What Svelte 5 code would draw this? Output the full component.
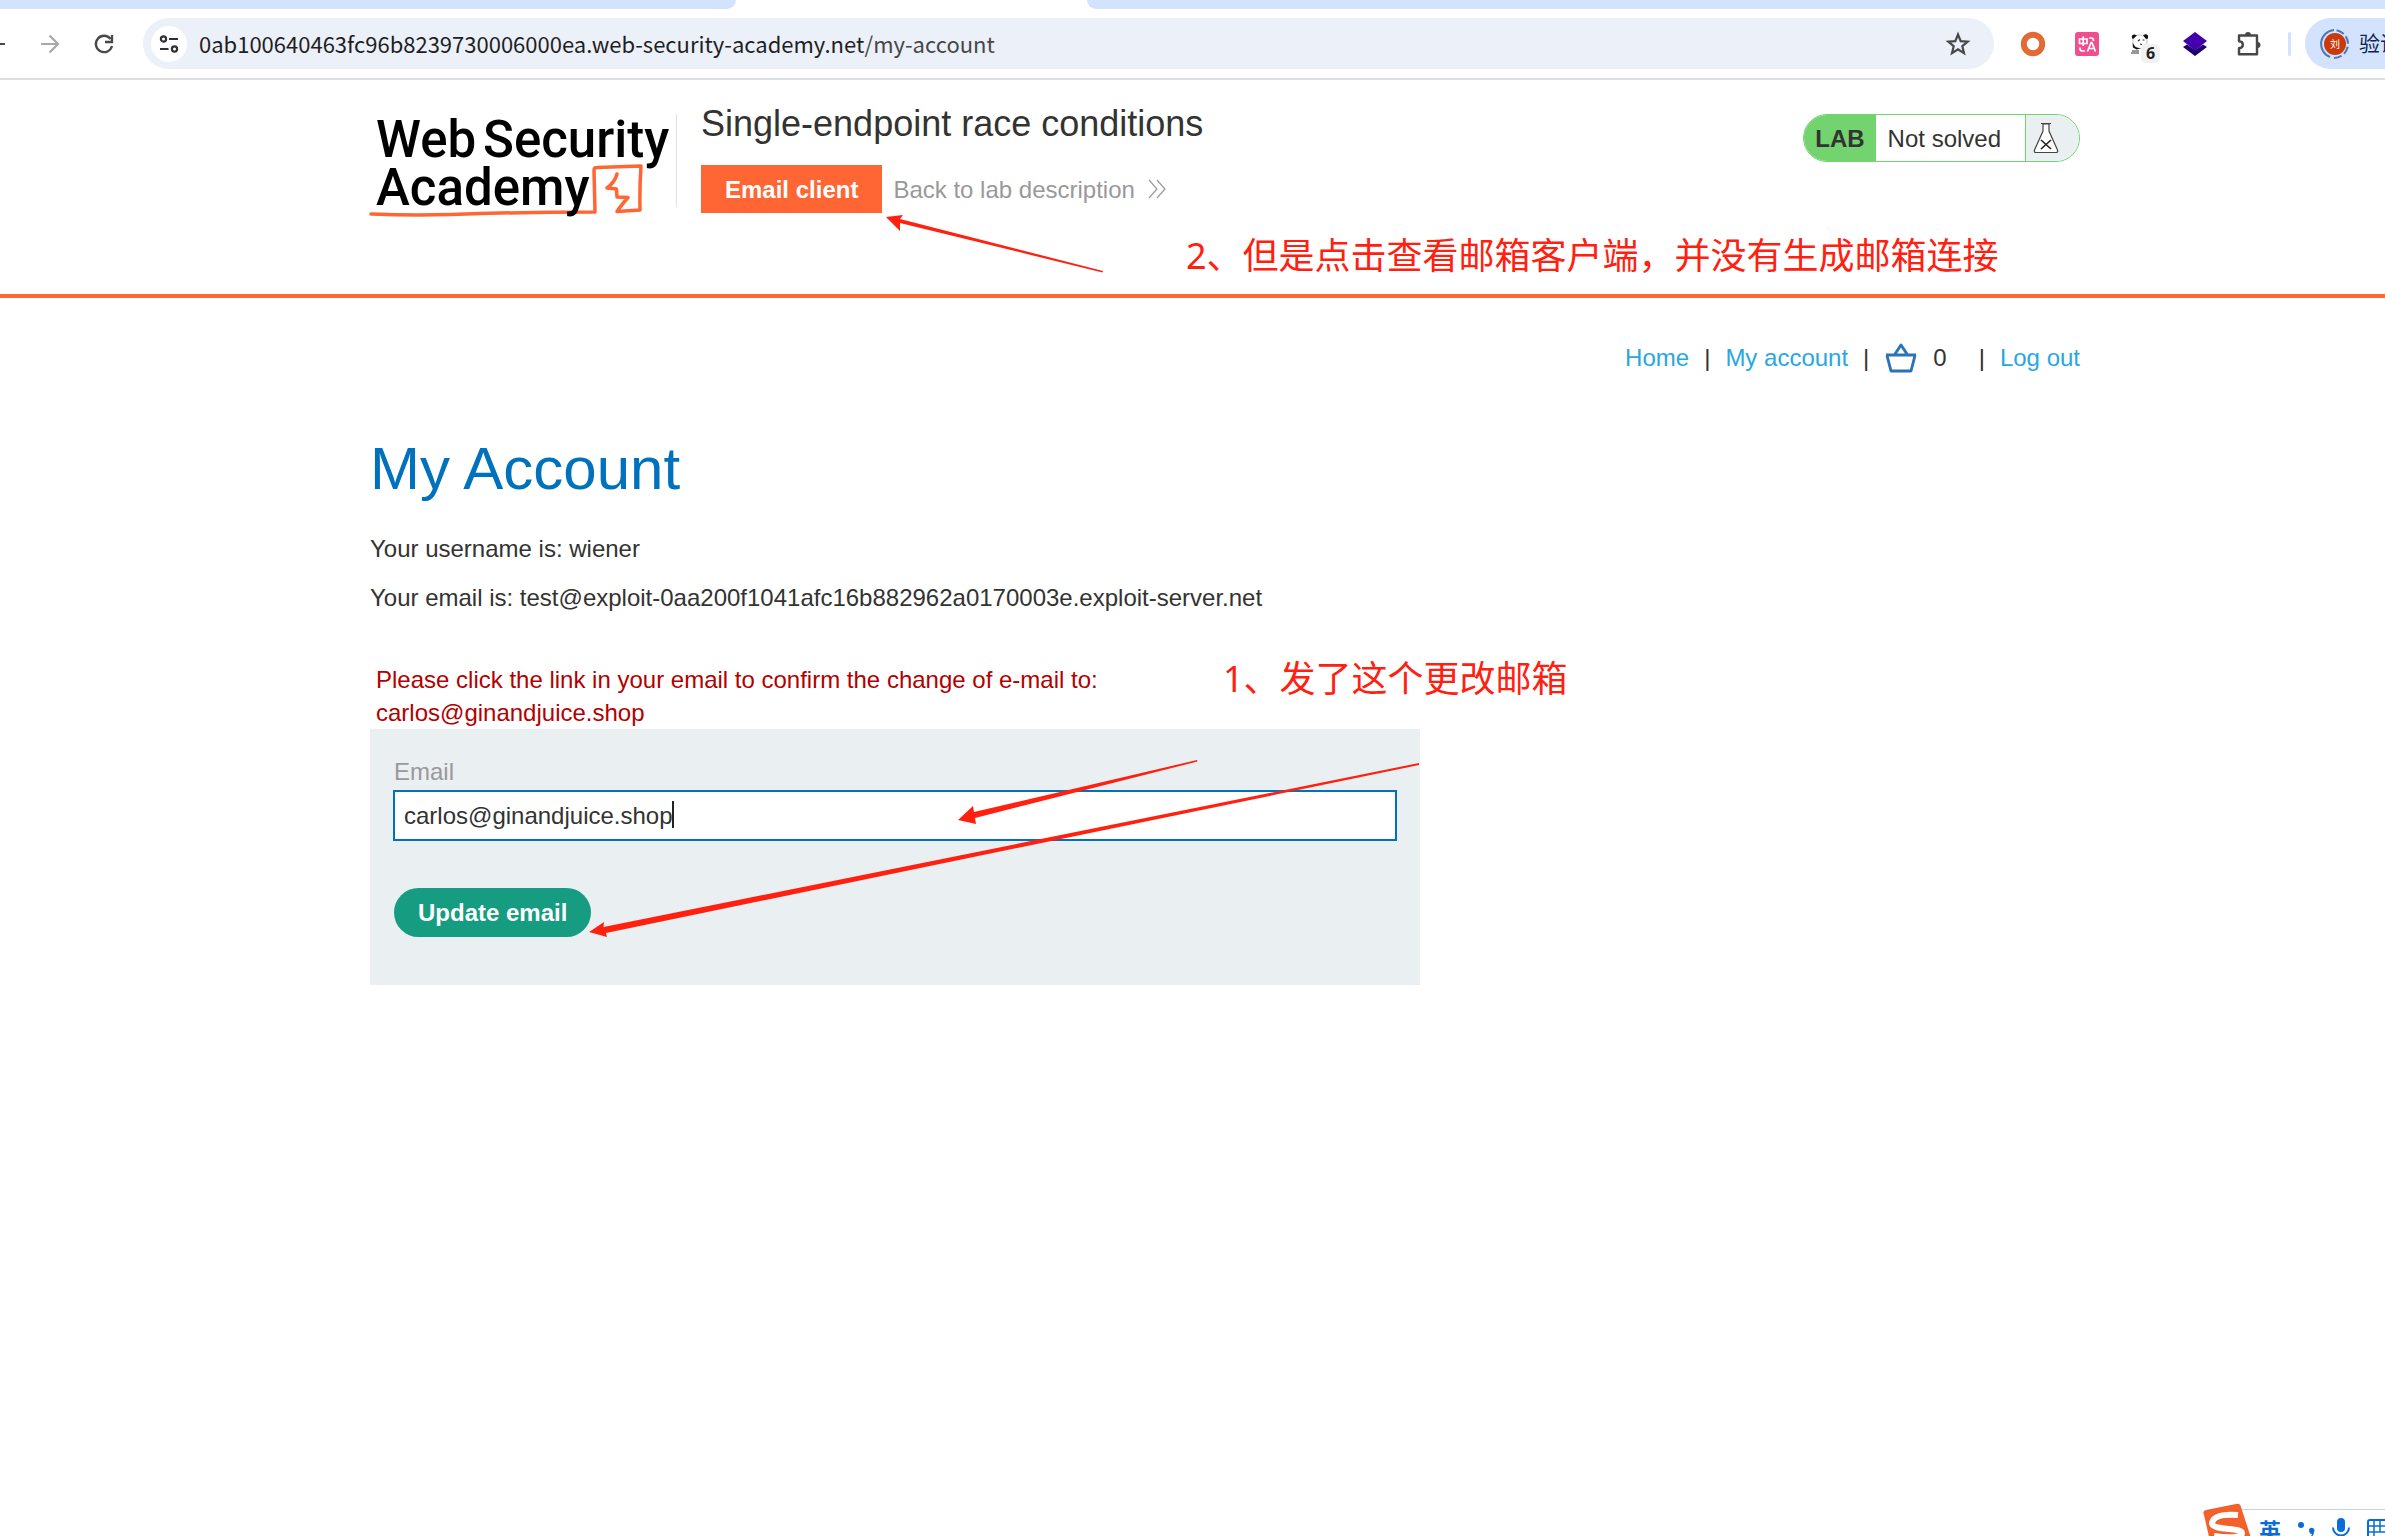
<script>
  let email = $state('carlos@ginandjuice.shop');
  const submit = (event) => event.preventDefault();
</script>

<div class="window">
  <div class="tabs" aria-hidden="true">
    <div class="tab before"></div>
    <div class="tab current"></div>
    <div class="tab after"></div>
  </div>

  <div class="toolbar">
    <button class="tool" aria-label="Back">
      <svg width="24" height="24" viewBox="0 0 24 24" fill="none" stroke="#474747" stroke-width="2.2"><path d="M21 12H4M12 3.500 3.500 12l8.500 8.500" /></svg>
    </button>
    <button class="tool" aria-label="Forward">
      <svg width="24" height="24" viewBox="0 0 24 24" fill="none" stroke="#a8a8a8" stroke-width="2.2"><path d="M3 12h16.500M11.500 3.500 20 12l-8.500 8.500" /></svg>
    </button>
    <button class="tool" aria-label="Reload">
      <svg width="24" height="24" viewBox="0 0 24 24" fill="none" stroke="#474747" stroke-width="2.3"><path d="M18.600 7A8.200 8.200 0 1 0 20 14" /><path d="M20 3v7h-7" /></svg>
    </button>

    <div class="address">
      <button class="site" aria-label="View site information">
        <svg width="20" height="20" viewBox="0 0 20 20" fill="none" stroke="#303134" stroke-width="2.2"><circle cx="4.500" cy="5" r="2.600" /><path d="M10 5h9M1 15h8.500" /><circle cx="15.500" cy="15" r="2.600" /></svg>
      </button>
      <span class="url">0ab100640463fc96b8239730006000ea.web-security-academy.net<span class="path">/my-account</span></span>
      <button class="star" aria-label="Bookmark this page">
        <svg width="26" height="26" viewBox="0 0 26 26" fill="none" stroke="#474747" stroke-width="2.2"><path d="m13 3.500 2.700 6.600 7 .5-5.400 4.600 1.700 6.900-6-3.700-6 3.700 1.700-6.900-5.400-4.600 7-.5z" /></svg>
      </button>
    </div>

    <div class="extensions">
      <button class="tool" aria-label="Ring extension">
        <svg width="26" height="26" viewBox="0 0 26 26"><circle cx="13" cy="13" r="9.200" fill="none" stroke="#e26a35" stroke-width="6" /></svg>
      </button>
      <button class="tool" aria-label="Translate extension">
        <svg width="24" height="24" viewBox="0 0 24 24" fill="none"><rect width="24" height="24" rx="3" fill="#f04e8c" /><path d="M4.500 7h7.500v4.500H4.500zM8.200 4.500V14M14 6h2.500q2 0 2 2.500V9M5 15.500v1q0 2.500 2.500 2.500H10M12.500 19.500l3.600-9h.8l3.600 9M13.800 16.500h5.400" stroke="#fff" stroke-width="1.7" /></svg>
      </button>
      <button class="tool panda" aria-label="Panda extension, 6 items">
        <svg width="20" height="22" viewBox="0 0 20 22"><path d="M3 5Q4 2 10 2t7 4q1 6-2 8t-8 1.500Q2 13 3 5z" fill="#fff" stroke="#999" stroke-width=".6" /><path d="M2 5Q1 1.500 4.500 1.500L7 2.500 3 6zM13 2.500q3-2.500 5 0v3l-2 .5zM2.500 10l3 4 5 1.500-4 1-3.500-2z" fill="#111" /><path d="m8 8 2-1.500M12.500 7h2M10 11l2 .500M2 18h7M1 20h8" stroke="#333" stroke-width="1.200" /></svg>
        <span class="count">6</span>
      </button>
      <button class="tool" aria-label="Layers extension">
        <svg width="26" height="26" viewBox="0 0 26 26"><path d="m1 16 4-2.500 8 5.500 8-5.500 4 2.500-12 9z" fill="#1e006e" /><path d="m13 1 12 9-12 9.500L1 10z" fill="#4300ac" /></svg>
      </button>
      <button class="tool" aria-label="Extensions">
        <svg width="26" height="26" viewBox="0 0 26 26" fill="none" stroke="#474747" stroke-width="2.400" stroke-linejoin="round"><path d="M3 4.500h18v18.800H3v-6q3.800-.4 3.800-3.600T3 10.300z" /><path d="M9 4a3 3 0 0 1 6 0zM21.500 11a3 3 0 0 1 0 6z" fill="#474747" stroke="none" /></svg>
      </button>
    </div>
    <span class="rule"></span>
    <button class="profile">
      <svg width="30" height="30" viewBox="0 0 30 30"><path d="M14 1A14 14 0 0 0 10 28" fill="none" stroke="#4f76b3" stroke-width="2" /><path d="M14 29A14 14 0 1 0 14 1" fill="none" stroke="#4f76b3" stroke-width="2" stroke-dasharray="8 3" /><circle cx="15" cy="15" r="11" fill="#c93a0c" /><text x="15" y="19" text-anchor="middle" class="initial">刘</text></svg>
      <span>验证</span>
    </button>
  </div>

  <div class="page">
    <header class="lab-header">
      <div class="heading">
        <a class="logo" href="#academy" aria-label="Web Security Academy">
          <svg width="300" height="106" viewBox="0 0 300 106">
            <path d="M1 100q40 1.500 80 .5Q150 98 225 98l-1-42q0-2.500 3-2.500l44-1.500q-1.500 22-1 44l-23 1.500q4-6 11-14l-11-.5-.5-8-9.500-1q8-6 10-14" fill="none" stroke="#f63" stroke-width="3.500" stroke-linejoin="round" stroke-linecap="round" />
            <g class="wordmark"><text x="6" y="43">Web</text><text x="113" y="43">Security</text><text x="6" y="91">Academy</text></g>
          </svg>
        </a>
        <div class="title">
          <h2>Single-endpoint race conditions</h2>
          <div class="actions">
            <a class="client" href="#email">Email client</a>
            <a class="back" href="#description">Back to lab description
              <svg width="18" height="20" viewBox="0 0 18 20" fill="none" stroke="#999" stroke-width="1.200"><path d="m1 1 8 9-8 9M9 1l8 9-8 9" /></svg>
            </a>
          </div>
        </div>
        <div class="status">
          <strong>LAB</strong>
          <span class="state">Not solved</span>
          <span class="flask">
            <svg width="26" height="32" viewBox="0 0 26 32" fill="#fff" stroke="#444" stroke-width="1.200"><path d="M8 1.500h10M10 2v7L1.500 28q-.8 2.500 1.500 2.500h20q2.300 0 1.500-2.500L16 9V2z" /><path d="m8 18 10 9M18 18 8 27" stroke="#222" stroke-width="1.600" /></svg>
          </span>
        </div>
      </div>
    </header>

    <main>
      <nav>
        <a href="#home">Home</a><span>|</span><a href="#account">My account</a><span>|</span>
        <a class="cart" href="#cart" aria-label="Basket">
          <svg width="34" height="30" viewBox="0 0 34 30" fill="none" stroke="#2b73b9" stroke-width="2.900" stroke-linejoin="round"><path d="M2 12h30M3 12.500 7 28h20l4-15.500M11 11l6-9 6 9" /></svg>
        </a>
        <span class="quantity">0</span><span>|</span><a href="#logout">Log out</a>
      </nav>
      <h1>My Account</h1>
      <div class="details">
        <p>Your username is: wiener</p>
        <p>Your email is: test@exploit-0aa200f1041afc16b882962a0170003e.exploit-server.net</p>
      </div>
      <p class="warning">Please click the link in your email to confirm the change of e-mail to:<br />carlos@ginandjuice.shop</p>
      <form onsubmit={submit}>
        <label for="email">Email</label>
        <div class="field">
          <input id="email" type="email" bind:value={email} />
          <span class="caret"></span>
        </div>
        <button class="update" type="submit">Update email</button>
      </form>
    </main>
  </div>

  <!-- Hand-drawn notes lying over the page -->
  <svg class="arrows" aria-hidden="true" width="1500" height="1000" viewBox="0 0 1500 1000" fill="#ff2010">
    <path d="m886 217 17-2-3 4 203 52-.5 1.500L900 223v8z" />
    <path d="m958 820 15-14 1 6 223-52 .5 1.500L975 818l1 6z" />
    <path d="m589 932 15-10-.5 5L1419 763v2L606 933l1 4z" />
  </svg>
  <p class="note second">2、但是点击查看邮箱客户端，并没有生成邮箱连接</p>
  <p class="note first">1、发了这个更改邮箱</p>

  <div class="ime">
    <svg class="sogou" width="50" height="38" viewBox="0 0 50 38"><path d="M2 12Q0 8 4 7L34 1q4-1 5 3l11 34H8z" fill="#f4602a" /><path d="M36 12Q12 10 10 20c0 8 30 4 30 10 0 5-14 5-28 3" fill="none" stroke="#fff" stroke-width="6" /></svg>
    <div class="ime-bar">
      <button class="lang">英</button>
      <button aria-label="Punctuation"><svg width="18" height="18" viewBox="0 0 18 18" fill="#0a6cd6"><circle cx="4" cy="5" r="3" /><path d="M12 9.500a2.800 2.800 0 1 1 5 2.500q0 4-4 6v-1.500q2-1 2-2.500-3 0-3-4.500z" /></svg></button>
      <button aria-label="Voice"><svg width="20" height="22" viewBox="0 0 20 22"><rect x="6" y="0" width="8" height="14" rx="4" fill="#0a6cd6" /><path d="M2 9.500a8 8 0 0 0 16 0M10 17v5" fill="none" stroke="#0a6cd6" stroke-width="2" /></svg></button>
      <button aria-label="Keyboard"><svg width="26" height="20" viewBox="0 0 26 20" fill="none" stroke="#0a6cd6" stroke-width="2"><rect x="1" y="1" width="24" height="18" rx="2" /><path d="M1 7h24M1 13h24M7 1v18M13 1v12M19 1v18" stroke-width="1.500" /></svg></button>
    </div>
  </div>
</div>

<style>
  :global(body) { background: #fff; }
  .window {
    position: relative;
    min-height: 100vh;
    overflow: hidden;
    font-family: "Liberation Sans", Arial, sans-serif;
    font-size: 24px;
    line-height: 33px;
    color: #333332;
  }
  h1, h2, p { margin: 0; font-weight: 400; }
  a { color: #29a7e0; text-decoration: none; }
  svg { display: block; flex: none; }
  button { border: 0; padding: 0; background: none; font: inherit; color: inherit; cursor: pointer; }

  .tabs { display: flex; height: 9px; }
  .tab { background: #d3e3fd; }
  .before { width: 736px; border-bottom-right-radius: 14px; }
  .current { width: 351px; background: #fff; }
  .after { flex: 1; border-bottom-left-radius: 14px; }

  .toolbar {
    display: flex;
    align-items: center;
    height: 69px;
    border-bottom: 2px solid #dfdfdf;
    font-family: "Noto Sans", "Noto Sans CJK SC", sans-serif;
  }
  .tool { display: flex; align-items: center; justify-content: center; width: 54px; height: 50px; flex: none; }
  .toolbar > .tool:first-child { margin-left: -31px; }
  .address {
    display: flex;
    align-items: center;
    flex: 1;
    min-width: 0;
    height: 51px;
    margin: 0 12px;
    padding: 0 23px 0 8px;
    border-radius: 26px;
    background: #ebf0f9;
  }
  .site { display: flex; align-items: center; justify-content: center; width: 36px; height: 36px; border-radius: 50%; background: #fff; }
  .url { flex: 1; margin-left: 12px; font-family: "Noto Sans CJK SC", sans-serif; font-size: 22px; color: #1f1f1f; white-space: nowrap; overflow: hidden; }
  .path { color: #474747; }
  .extensions { display: flex; }
  .panda { position: relative; }
  .panda svg { margin-right: 2px; }
  .count { position: absolute; left: 27px; top: 25px; width: 19px; border-radius: 5px; background: #f1f1f1; font-size: 16px; line-height: 19px; font-weight: 700; color: #1f1f1f; }
  .rule { width: 3px; height: 24px; margin: 0 14px 0 12px; border-radius: 2px; background: #d3e3fd; }
  .profile {
    display: flex;
    align-items: center;
    gap: 9px;
    width: 80px;
    height: 51px;
    flex: none;
    padding-left: 15px;
    border-radius: 26px 0 0 26px;
    background: #d3e3fd;
    color: #0b2350;
    font-size: 21px;
    white-space: nowrap;
    overflow: hidden;
  }
  .initial { font-size: 10px; fill: #fff; }

  /* The column is centred on a page that runs 65px past the window's right edge. */
  .page { padding-left: 65px; }
  .heading, main { max-width: 1710px; margin: 0 auto; }
  .lab-header { box-sizing: border-box; min-height: 218px; margin-left: -65px; padding: 23px 0 0 65px; border-bottom: 4px solid #f63; }
  main { padding-top: 42px; }
  .heading { display: flex; align-items: flex-start; }
  .logo { margin-top: 11px; padding-right: 6px; height: 93px; border-right: 1px solid #e2e2e2; }
  .logo svg { overflow: visible; }
  .wordmark { font-family: Roboto, sans-serif; font-weight: 500; font-size: 51px; fill: #000; }
  .title { flex: 1; margin-left: 24px; }
  h2 { font-size: 36px; line-height: 42px; }
  .actions { display: flex; align-items: center; gap: 11px; margin-top: 20px; }
  .client { padding: 1px 24px 0; background: #f63; color: #fff; font-weight: 700; line-height: 47px; }
  .back { display: flex; align-items: center; gap: 13px; color: #999; }
  .status { display: flex; box-sizing: border-box; height: 48px; margin-top: 11px; border: 1px solid #72d36f; border-radius: 24px; overflow: hidden; line-height: 47px; }
  .status strong { padding: 0 11px; background: #72d36f; }
  .state { padding: 0 24px 0 12px; }
  .flask { display: flex; align-items: center; box-sizing: border-box; width: 54px; padding-left: 7px; border-left: 1px solid #72d36f; background: #eaeff2; }

  nav { display: flex; align-items: center; justify-content: flex-end; gap: 15px; line-height: 36px; }
  .quantity { margin-right: 17px; }
  h1 { margin-top: 60px; font-size: 60px; line-height: 66px; color: #0071bc; }
  .details { display: grid; gap: 16px; margin-top: 30px; overflow-wrap: anywhere; }
  .warning { margin-top: 49px; padding: 0 6px; color: #b30000; }
  form { box-sizing: border-box; max-width: 1050px; padding: 25px 24px 48px; background: #eaeff2; }
  label { display: block; margin-bottom: 1px; line-height: 36px; color: #999; }
  .field { position: relative; margin-bottom: 48px; }
  input {
    display: block;
    box-sizing: border-box;
    width: 100%;
    height: 49px;
    padding: 0 9px;
    border: 1px solid #0071bc;
    border-radius: 0;
    outline: 1px solid #0071bc;
    background: #fff;
    font: inherit;
    color: inherit;
  }
  .caret { position: absolute; left: 278px; top: 10px; width: 2px; height: 27px; background: #222; }
  .update { height: 49px; padding: 0 24px; border-radius: 25px; background: #169c80; color: #fff; font-weight: 700; }

  .arrows { position: absolute; left: 0; top: 0; pointer-events: none; }
  .note { position: absolute; font-family: "Noto Sans", "Noto Sans CJK SC", sans-serif; font-size: 36px; line-height: 48px; color: #ff2010; white-space: nowrap; }
  .second { left: 1186px; top: 232px; }
  .first { left: 1223px; top: 655px; }

  .ime { position: absolute; right: 0; bottom: 0; display: flex; align-items: flex-end; height: 33px; width: 183px; }
  .sogou { position: absolute; left: 0; top: 0; z-index: 1; }
  .ime-bar { box-sizing: border-box; display: flex; align-items: center; gap: 16px; flex: 1; min-width: 0; height: 27px; margin-left: 30px; padding-left: 27px; border-top: 1px solid #c5d2e4; overflow: hidden; background: #fff; }
  .ime-bar button { flex: none; padding-top: 11px; }
  .lang { font-family: "Noto Sans CJK SC", sans-serif; font-size: 22px; line-height: 22px; font-weight: 700; color: #0a6cd6; }
</style>
